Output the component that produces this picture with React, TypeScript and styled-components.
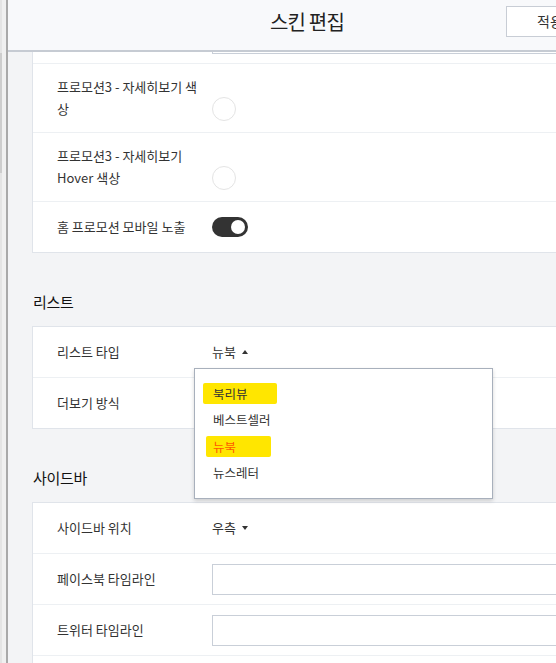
import styled, { createGlobalStyle } from 'styled-components';

const GlobalStyle = createGlobalStyle`
  html, body {
    margin: 0;
    padding: 0;
    overflow: hidden;
    background: #f3f4f6;
  }
  body {
    font-family: "Noto Sans CJK KR", "Noto Sans", sans-serif;
    color: #333;
  }
  * {
    box-sizing: border-box;
  }
`;

const Frame = styled.div`
  display: flex;
  width: 606px;
  height: 663px;
`;

const Gutter = styled.div`
  flex: 0 0 8px;
  display: flex;
  background: #f0f0f0;
  border-right: 2px solid #a9a9a9;
`;

const Track = styled.div`
  width: 2px;
  background: #e4e4e4;
`;

const Thumb = styled.div`
  margin-top: 53px;
  height: 120px;
  background: #cdcdcd;
`;

const Panel = styled.div`
  flex: 1;
  display: flex;
  flex-direction: column;
  min-width: 0;
  background: #f3f4f6;
`;

const Header = styled.header`
  flex: 0 0 52px;
  display: grid;
  grid-template-columns: 1fr auto 1fr;
  align-items: center;
  padding: 0 12px 8px;
  background: #f8f9fb;
  border-bottom: 2px solid #c6cbd3;
`;

const Title = styled.h1`
  grid-column: 2;
  margin: 0;
  font-size: 20px;
  font-weight: 400;
  letter-spacing: -0.8px;
  color: #222;
`;

const ApplyButton = styled.button`
  justify-self: end;
  width: 88px;
  height: 31px;
  border: 1px solid #c8cdd5;
  background: #fff;
  font-family: inherit;
  font-size: 14px;
  color: #333;
`;

const Content = styled.div`
  flex: 1;
  overflow: hidden;
  padding: 0 24px;
`;

const Card = styled.section<{ $offset?: number }>`
  background: #fff;
  border: 1px solid #e0e4ea;
  margin-top: ${(p) => p.$offset ?? 0}px;
`;

const SectionTitle = styled.h2`
  margin: 37px 0 12px 1px;
  font-size: 15px;
  font-weight: 400;
  line-height: 24px;
  letter-spacing: -0.3px;
  color: #111;
`;

const Row = styled.div<{ $compact?: boolean }>`
  display: flex;
  align-items: center;
  box-sizing: content-box;
  min-height: ${(p) => (p.$compact ? 50 : 26)}px;
  padding: ${(p) => (p.$compact ? '0 24px' : '12px 24px')};
  & + & {
    border-top: 1px solid #edf0f3;
  }
`;

const Label = styled.div`
  flex: 0 0 155px;
  padding-right: 8px;
  font-size: 13px;
  line-height: 22px;
  color: #333;
`;

const Value = styled.div<{ $bottom?: boolean }>`
  flex: 1;
  display: flex;
  align-items: center;
  align-self: ${(p) => (p.$bottom ? 'flex-end' : 'center')};
  margin-bottom: ${(p) => (p.$bottom ? -1 : 0)}px;
`;

const ColorDot = styled.span`
  width: 24px;
  height: 24px;
  border-radius: 50%;
  border: 1px solid #e4e4e4;
  background: #fff;
`;

const Toggle = styled.span`
  display: flex;
  align-items: center;
  width: 36px;
  height: 20px;
  border-radius: 10px;
  background: #333;
`;

const Knob = styled.span`
  width: 14px;
  height: 14px;
  margin-left: auto;
  margin-right: 3px;
  border-radius: 50%;
  background: #fff;
`;

const TextInput = styled.input`
  flex: 1;
  height: 31px;
  border: 1px solid #c9cfd8;
  background: #fff;
  outline: none;
`;

const Select = styled.div`
  position: relative;
  display: inline-flex;
  align-items: center;
  gap: 6px;
  font-size: 13px;
  line-height: 22px;
  color: #333;
`;

const Caret = styled.span<{ $up?: boolean }>`
  width: 0;
  height: 0;
  border-left: 3.5px solid transparent;
  border-right: 3.5px solid transparent;
  border-top: ${(p) => (p.$up ? '0' : '4px solid #333')};
  border-bottom: ${(p) => (p.$up ? '4px solid #333' : '0')};
`;

const Menu = styled.ul`
  position: absolute;
  top: calc(100% + 5px);
  left: -18px;
  z-index: 10;
  width: 299px;
  margin: 0;
  padding: 11px 0 11px 18px;
  list-style: none;
  background: #fff;
  border: 1px solid #a8b0bc;
  box-shadow: 0 2px 4px rgba(0, 0, 0, 0.16);
`;

const Option = styled.li<{ $active?: boolean }>`
  height: 26.7px;
  display: flex;
  align-items: center;
  font-size: 12.5px;
  color: ${(p) => (p.$active ? '#ff5a00' : '#333')};
`;

const Marker = styled.span<{ $lead: number; $tail: number }>`
  display: inline-block;
  line-height: 21px;
  margin-left: -${(p) => p.$lead}px;
  padding: 0 ${(p) => p.$tail}px 0 ${(p) => p.$lead}px;
  background: #ffe600;
  border-radius: 2px;
`;

export default function App() {
  return (
    <Frame>
      <GlobalStyle />
      <Gutter>
        <Track>
          <Thumb />
        </Track>
      </Gutter>
      <Panel>
        <Header>
          <Title>스킨 편집</Title>
          <ApplyButton>적용</ApplyButton>
        </Header>
        <Content>
          <Card $offset={-40}>
            <Row $compact>
              <Label />
              <Value>
                <TextInput />
              </Value>
            </Row>
            <Row>
              <Label>프로모션3 - 자세히보기 색상</Label>
              <Value $bottom>
                <ColorDot />
              </Value>
            </Row>
            <Row>
              <Label>프로모션3 - 자세히보기 Hover 색상</Label>
              <Value $bottom>
                <ColorDot />
              </Value>
            </Row>
            <Row>
              <Label>홈 프로모션 모바일 노출</Label>
              <Value>
                <Toggle>
                  <Knob />
                </Toggle>
              </Value>
            </Row>
          </Card>

          <SectionTitle>리스트</SectionTitle>
          <Card>
            <Row>
              <Label>리스트 타입</Label>
              <Value>
                <Select>
                  뉴북
                  <Caret $up />
                  <Menu>
                    <Option>
                      <Marker $lead={10} $tail={29}>북리뷰</Marker>
                    </Option>
                    <Option>베스트셀러</Option>
                    <Option $active>
                      <Marker $lead={7} $tail={35}>뉴북</Marker>
                    </Option>
                    <Option>뉴스레터</Option>
                  </Menu>
                </Select>
              </Value>
            </Row>
            <Row>
              <Label>더보기 방식</Label>
              <Value />
            </Row>
          </Card>

          <SectionTitle>사이드바</SectionTitle>
          <Card>
            <Row>
              <Label>사이드바 위치</Label>
              <Value>
                <Select>
                  우측
                  <Caret />
                </Select>
              </Value>
            </Row>
            <Row $compact>
              <Label>페이스북 타임라인</Label>
              <Value>
                <TextInput />
              </Value>
            </Row>
            <Row $compact>
              <Label>트위터 타임라인</Label>
              <Value>
                <TextInput />
              </Value>
            </Row>
            <Row $compact>
              <Label />
              <Value>
                <TextInput />
              </Value>
            </Row>
          </Card>
        </Content>
      </Panel>
    </Frame>
  );
}
